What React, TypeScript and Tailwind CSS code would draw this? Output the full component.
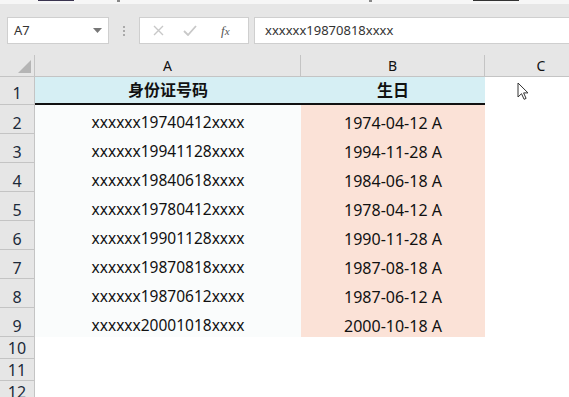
import React from 'react';

const ROWS = [
  { id: 'xxxxxx19740412xxxx', date: '1974-04-12 A' },
  { id: 'xxxxxx19941128xxxx', date: '1994-11-28 A' },
  { id: 'xxxxxx19840618xxxx', date: '1984-06-18 A' },
  { id: 'xxxxxx19780412xxxx', date: '1978-04-12 A' },
  { id: 'xxxxxx19901128xxxx', date: '1990-11-28 A' },
  { id: 'xxxxxx19870818xxxx', date: '1987-08-18 A' },
  { id: 'xxxxxx19870612xxxx', date: '1987-06-12 A' },
  { id: 'xxxxxx20001018xxxx', date: '2000-10-18 A' },
];

const font = { fontFamily: '"Noto Sans", "Noto Sans CJK SC", sans-serif' };

const RowHead = ({ n, h }: { n: number; h: string }) => (
  <div className={`${h} flex items-center justify-center bg-[#e6e6e6] border-r border-b border-[#c4c4c4] text-[16px] text-[#1c2a3a]`}>
    {n}
  </div>
);

export default function App() {
  return (
    <div className="w-[569px] h-[397px] overflow-hidden bg-white text-[#111]" style={font}>
      {/* cut-off ribbon strip */}
      <div className="relative h-[4px] bg-[#f6f6f6]">
        <div className="absolute left-[38px] top-0 w-[36px] h-[1px] bg-[#3a3450]" />
        <div className="absolute left-[117px] top-0 w-[3px] h-[2px] bg-[#888]" />
        <div className="absolute left-[369px] top-0 w-[3px] h-[2px] bg-[#888]" />
        <div className="absolute left-[473px] top-0 w-[46px] h-[1px] bg-[#333]" />
      </div>

      {/* formula bar */}
      <div className="h-[51px] bg-[#e6e6e6] flex items-start pt-[13px] pl-[7px]">
        <div className="w-[102px] h-[27px] bg-white border border-[#cfcfcf] flex items-center justify-between pl-[6px] pr-[6px]">
          <span className="text-[13px] text-[#333]">A7</span>
          <svg width="9" height="5" viewBox="0 0 9 5"><path d="M0 0h9L4.5 5z" fill="#777" /></svg>
        </div>
        <div className="w-[30px] h-[27px] flex flex-col items-center justify-center gap-[2px]">
          <span className="w-[2px] h-[2px] bg-[#aaa]" />
          <span className="w-[2px] h-[2px] bg-[#aaa]" />
          <span className="w-[2px] h-[2px] bg-[#aaa]" />
        </div>
        <div className="w-[110px] h-[27px] bg-white border border-[#cfcfcf] flex items-center pl-[13px] gap-[19px]">
          <svg width="11" height="11" viewBox="0 0 11 11"><path d="M1 1l9 9M10 1l-9 9" stroke="#c8c8c8" strokeWidth="1.4" /></svg>
          <svg width="14" height="11" viewBox="0 0 14 11"><path d="M1 6l4 4 8-9" stroke="#c8c8c8" strokeWidth="1.8" fill="none" /></svg>
          <span className="ml-[5px] text-[13px] italic text-[#555]" style={{ fontFamily: '"Liberation Serif", serif' }}>
            f<span className="text-[11px]">x</span>
          </span>
        </div>
        <div className="ml-[5px] flex-1 h-[27px] bg-white border border-[#cfcfcf] border-r-0 flex items-center pl-[10px] text-[13px] text-[#333]">
          xxxxxx19870818xxxx
        </div>
      </div>

      {/* grid */}
      <div className="grid grid-cols-[35px_266px_184px_1fr]">
        {/* column headers */}
        <div className="relative h-[22px] bg-[#e6e6e6] border-r border-b border-[#c4c4c4]">
          <svg className="absolute right-[3px] bottom-[3px]" width="13" height="13" viewBox="0 0 13 13"><path d="M13 0v13H0z" fill="#b5b5b5" /></svg>
        </div>
        <div className="h-[22px] bg-[#e6e6e6] border-r border-b border-[#c4c4c4] flex items-center justify-center text-[14px]">A</div>
        <div className="h-[22px] bg-[#e6e6e6] border-r border-b border-[#c4c4c4] flex items-center justify-center text-[14px]">B</div>
        <div className="h-[22px] bg-[#e6e6e6] border-b border-[#c4c4c4] flex items-center justify-center text-[14px] pl-[28px]">C</div>

        {/* row 1 */}
        <RowHead n={1} h="h-[28px] pt-[5px]" />
        <div className="h-[28px] bg-[#d6eff4] border-b-2 border-[#111] flex items-center justify-center text-[16px] font-bold">身份证号码</div>
        <div className="h-[28px] bg-[#d6eff4] border-b-2 border-[#111] flex items-center justify-center text-[16px] font-bold">生日</div>
        <div className="relative h-[28px]">
          <svg className="absolute left-[32px] top-[5px]" width="12" height="18" viewBox="0 0 12 18">
            <path d="M1 1v14l3.5-3.3 2.6 5.6 2-0.9-2.5-5.5H11z" fill="#fff" stroke="#333" strokeWidth="1" strokeLinejoin="round" />
          </svg>
        </div>

        {ROWS.map((r, i) => (
          <React.Fragment key={i}>
            <RowHead n={i + 2} h="h-[29px] pt-[7px]" />
            <div className="h-[29px] pt-[7px] bg-[#fafcfc] flex items-center justify-center text-[15.5px]">{r.id}</div>
            <div className="h-[29px] pt-[7px] bg-[#fbe2d7] flex items-center justify-center text-[16px]">{r.date}</div>
            <div className="h-[29px]" />
          </React.Fragment>
        ))}

        {[10, 11, 12].map((n) => (
          <React.Fragment key={n}>
            <RowHead n={n} h="h-[22px]" />
            <div className="h-[22px]" />
            <div className="h-[22px]" />
            <div className="h-[22px]" />
          </React.Fragment>
        ))}
      </div>
    </div>
  );
}
